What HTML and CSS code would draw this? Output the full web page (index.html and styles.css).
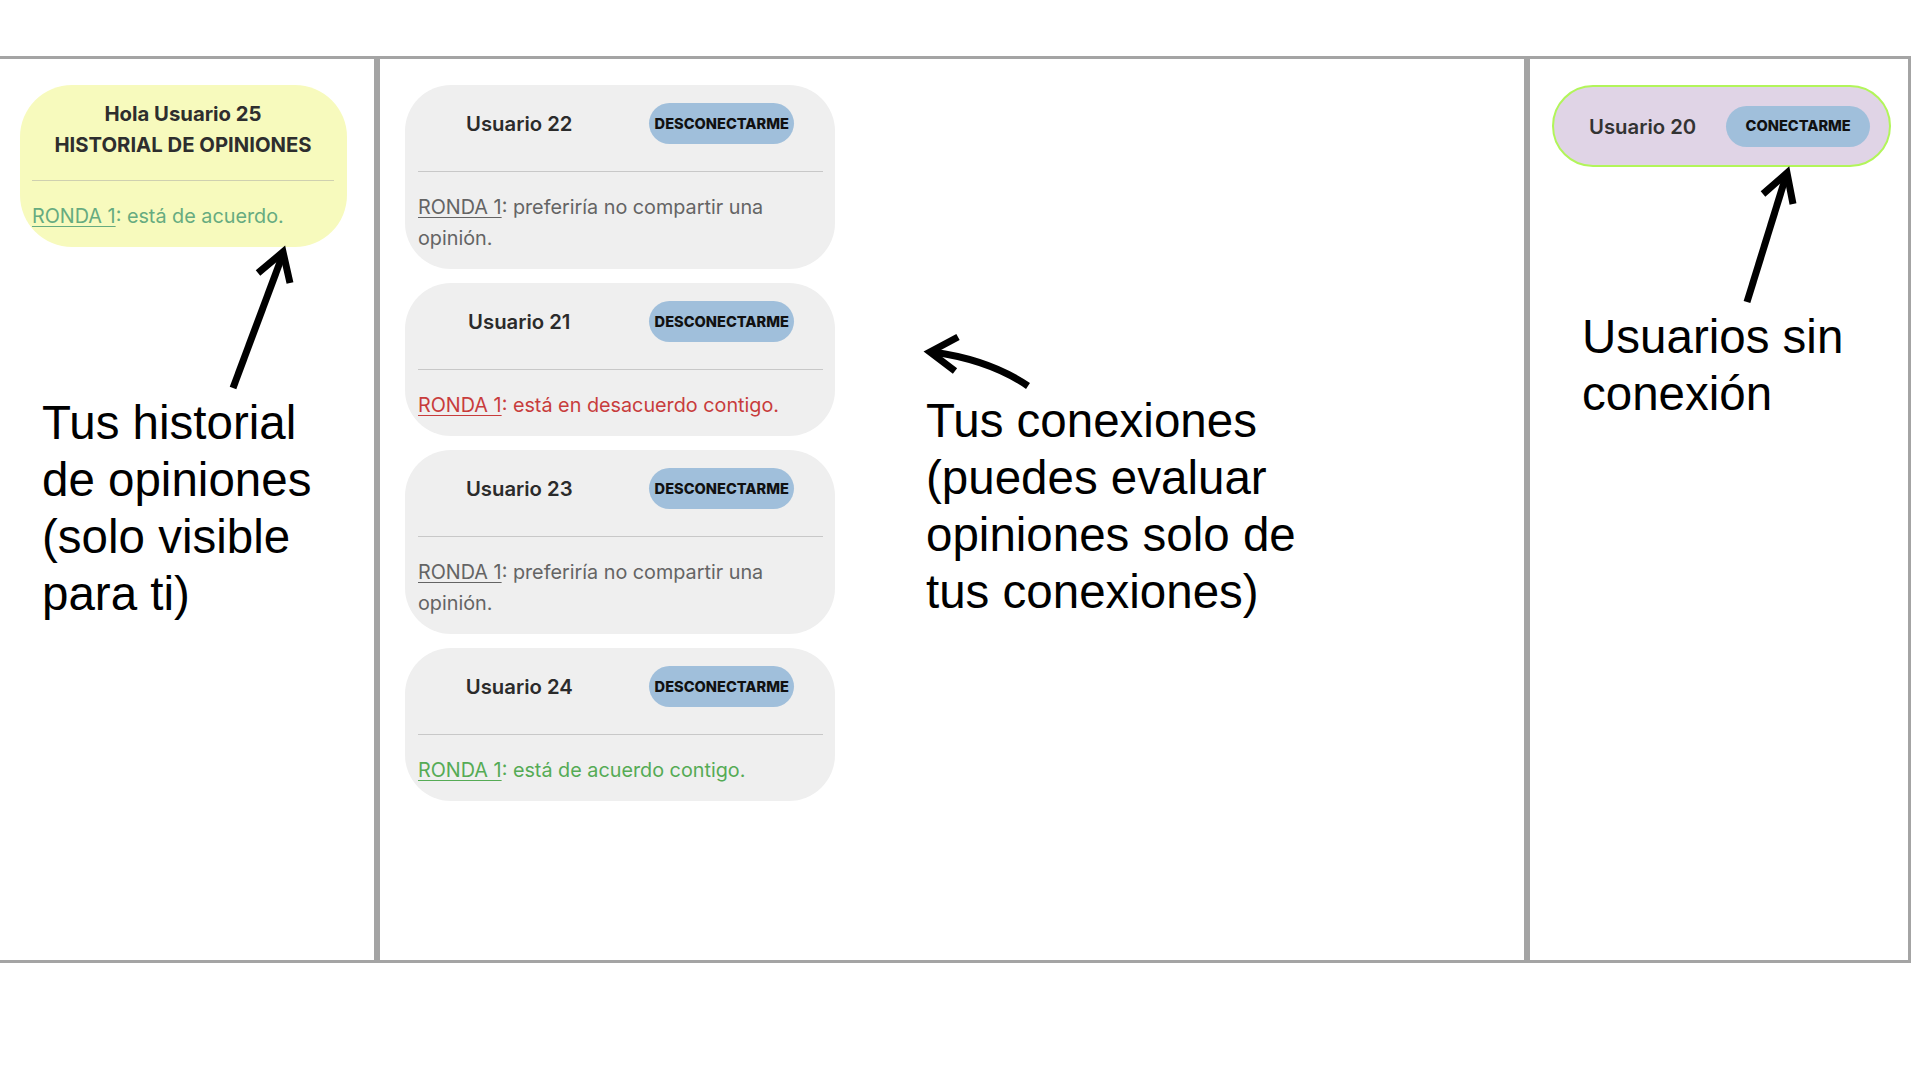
FILE: index.html
```html
<!DOCTYPE html>
<html lang="es">
<head>
<meta charset="utf-8">
<title>Conexiones</title>
<link rel="stylesheet" href="styles.css">
</head>
<body>
<main class="board">
  <section class="panel panel-left">
    <div class="card card-history">
      <h2 class="history-title">Hola Usuario 25<br>HISTORIAL DE OPINIONES</h2>
      <hr class="divider">
      <p class="opinion agree-soft"><a href="#">RONDA 1</a>: está de acuerdo.</p>
    </div>
  </section>

  <section class="panel panel-mid">
    <div class="card card-conn">
      <div class="conn-head">
        <span class="conn-name">Usuario 22</span>
        <span class="conn-cell"><button class="btn">DESCONECTARME</button></span>
      </div>
      <hr class="divider">
      <p class="opinion neutral"><a href="#">RONDA 1</a>: preferiría no compartir una<br>opinión.</p>
    </div>
    <div class="card card-conn">
      <div class="conn-head">
        <span class="conn-name">Usuario 21</span>
        <span class="conn-cell"><button class="btn">DESCONECTARME</button></span>
      </div>
      <hr class="divider">
      <p class="opinion disagree"><a href="#">RONDA 1</a>: está en desacuerdo contigo.</p>
    </div>
    <div class="card card-conn">
      <div class="conn-head">
        <span class="conn-name">Usuario 23</span>
        <span class="conn-cell"><button class="btn">DESCONECTARME</button></span>
      </div>
      <hr class="divider">
      <p class="opinion neutral"><a href="#">RONDA 1</a>: preferiría no compartir una<br>opinión.</p>
    </div>
    <div class="card card-conn">
      <div class="conn-head">
        <span class="conn-name">Usuario 24</span>
        <span class="conn-cell"><button class="btn">DESCONECTARME</button></span>
      </div>
      <hr class="divider">
      <p class="opinion agree"><a href="#">RONDA 1</a>: está de acuerdo contigo.</p>
    </div>
  </section>

  <section class="panel panel-right">
    <div class="card card-offline">
      <span class="off-name">Usuario 20</span>
      <button class="btn btn-connect">CONECTARME</button>
    </div>
  </section>
</main>

<div class="note note-left">Tus historial<br>de opiniones<br>(solo visible<br>para ti)</div>
<div class="note note-mid">Tus conexiones<br>(puedes evaluar<br>opiniones solo de<br>tus conexiones)</div>
<div class="note note-right">Usuarios sin<br>conexión</div>

<svg class="arrows" width="1920" height="1080" viewBox="0 0 1920 1080" xmlns="http://www.w3.org/2000/svg">
  <g fill="none" stroke="#000" stroke-width="7" stroke-linecap="butt" stroke-linejoin="miter">
    <path d="M233 388 L283 254"/>
    <path d="M258 273 L283 252 L290 283"/>
    <path d="M1028 386 Q 990 360 933 352"/>
    <path d="M958 337 L930 352 L955 371"/>
    <path d="M1747 302 L1786 176"/>
    <path d="M1763 194 L1787 173 L1793 204"/>
  </g>
</svg>
</body>
</html>
```
FILE: styles.css
```css
* { box-sizing: border-box; }

html, body {
  margin: 0;
  padding: 0;
  background: #ffffff;
  width: 1920px;
  height: 1080px;
  overflow: hidden;
}

body {
  font-family: Inter, "Noto Sans", sans-serif;
  position: relative;
}

.board {
  display: flex;
  margin: 56px 0 0 -3px;
  height: 907px;
}

.panel {
  border: 3px solid #a4a4a4;
  height: 100%;
  padding-top: 26px;
  display: flex;
  flex-direction: column;
  align-items: flex-start;
}

.panel-left { width: 380px; padding-left: 20px; }
.panel-mid { width: 1150px; padding-left: 25px; gap: 14px; }
.panel-right { width: 384px; padding-left: 22px; }

.card { background: #efefef; }

.card-history {
  width: 327px;
  background: #f7fabd;
  border-radius: 52px;
  padding: 13px 13px 15px 12px;
}

.history-title {
  margin: 0;
  text-align: center;
  font-size: 20.3px;
  font-weight: 700;
  line-height: 31px;
  color: #2e2e2e;
}

.divider {
  border: 0;
  border-top: 1px solid #c8c8c8;
  margin: 20px 0 20px;
}

.card-history .divider { border-top-color: #cfd0b0; }

.opinion {
  margin: 0;
  font-size: 19.8px;
  line-height: 31px;
}

.opinion a { color: inherit; text-decoration: underline; text-underline-offset: 3px; text-decoration-thickness: 1px; }

.neutral { color: #646464; }
.disagree { color: #c83c3c; }
.agree { color: #55ab55; }
.agree-soft { color: #66ab80; }

.card-conn {
  width: 430px;
  border-radius: 46px;
  padding: 18px 12px 15px 13px;
}

.card-conn .divider { margin: 27px 0 20px; }

.conn-head {
  display: grid;
  grid-template-columns: 1fr 1fr;
  align-items: center;
  height: 41px;
}

.conn-name, .off-name {
  text-align: center;
  font-size: 20.3px;
  font-weight: 600;
  color: #2b2b2b;
}

.conn-cell { display: flex; justify-content: center; }

.btn {
  font-family: Inter, "Noto Sans", sans-serif;
  background: #a0bfdb;
  border: 0;
  border-radius: 21px;
  height: 41px;
  width: 145px;
  padding: 0;
  font-size: 14.6px;
  font-weight: 800;
  color: #111;
  white-space: nowrap;
}

.card-offline {
  width: 339px;
  height: 82px;
  background: #e0d4e6;
  border: 2px solid #b2f55a;
  border-radius: 41px;
  display: flex;
  align-items: center;
  padding-left: 35px;
  gap: 30px;
}

.off-name { color: #333; }

.btn-connect { width: 144px; }

.note {
  position: absolute;
  font-family: "Liberation Sans", Arial, sans-serif;
  font-size: 47.5px;
  line-height: 57px;
  color: #000;
  white-space: nowrap;
}

.note-left { left: 42px; top: 394px; }
.note-mid { left: 926px; top: 392px; }
.note-right { left: 1582px; top: 308px; }

.arrows {
  position: absolute;
  left: 0;
  top: 0;
  pointer-events: none;
}
```
